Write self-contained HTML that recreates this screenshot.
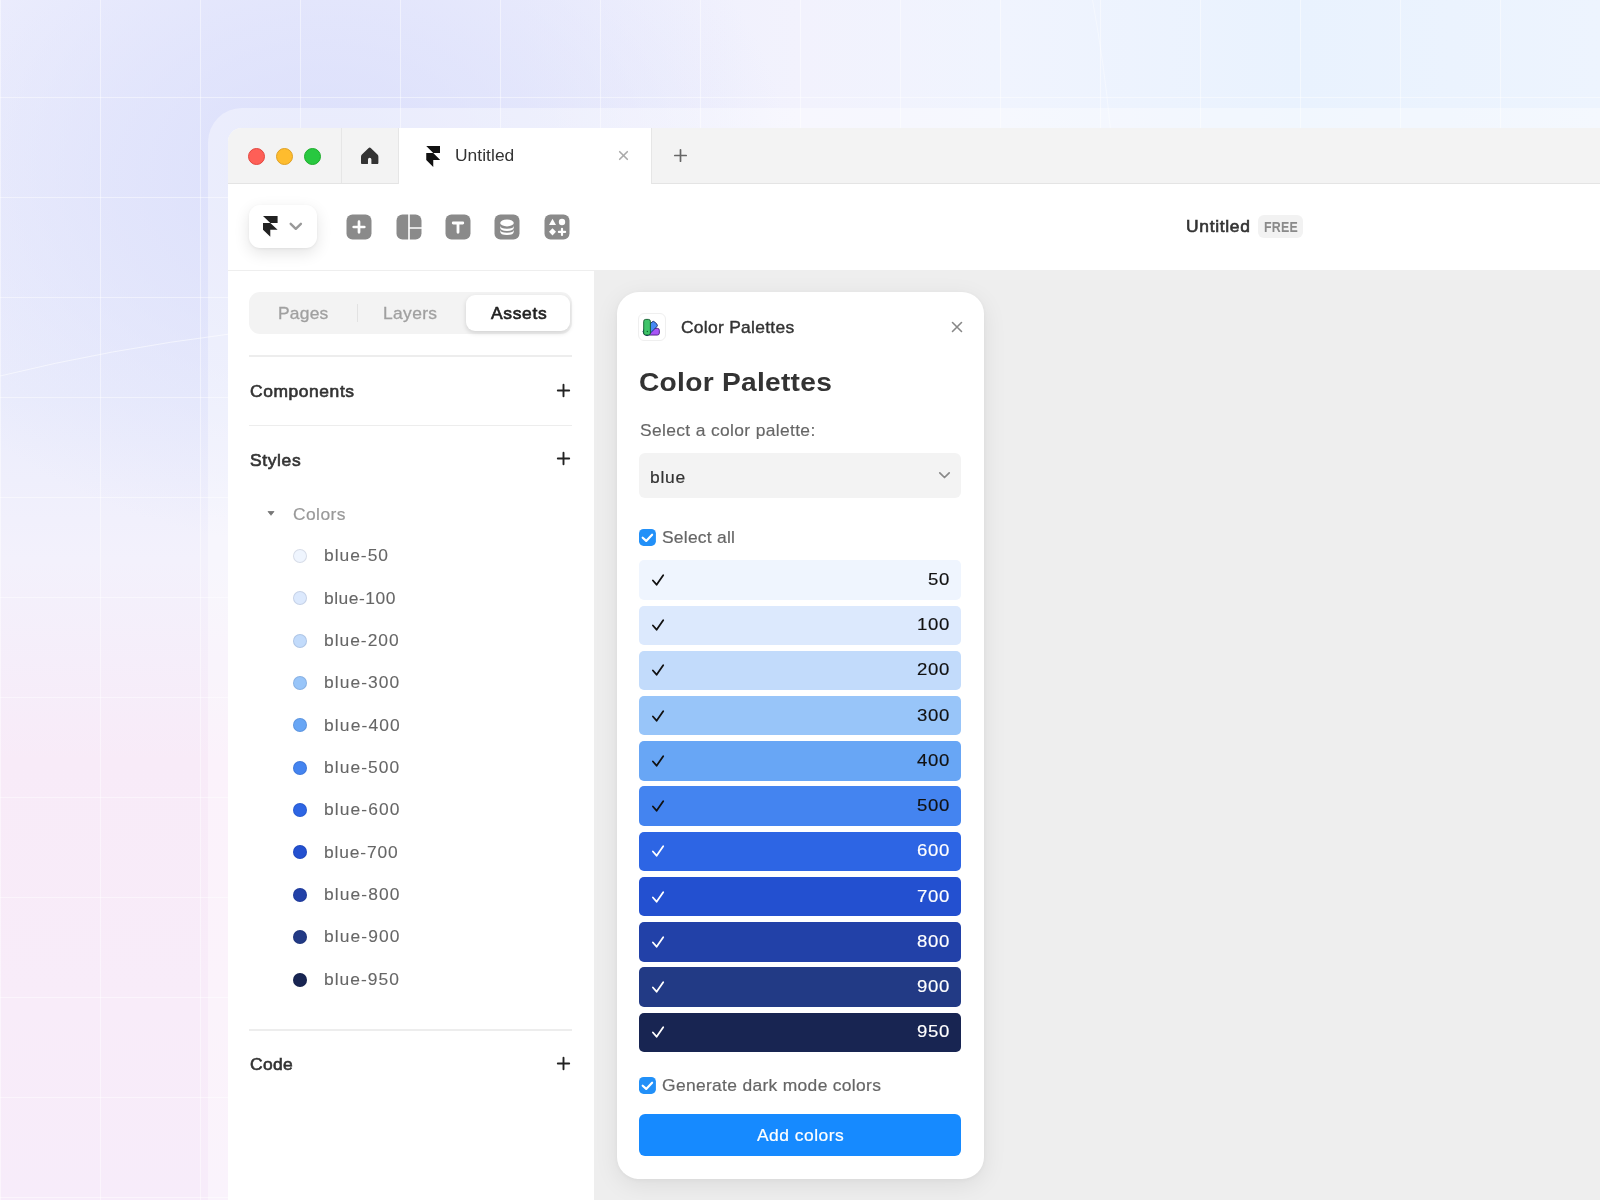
<!DOCTYPE html>
<html lang="en">
<head>
<meta charset="utf-8">
<title>Color Palettes</title>
<style>
*{box-sizing:border-box;margin:0;padding:0}
html,body{width:1600px;height:1200px;overflow:hidden}
body{font-family:"Liberation Sans",sans-serif;position:relative;background:#f3f1fb;color:#333}
.bg{position:absolute;inset:0;background:
 radial-gradient(ellipse 470px 370px at 320px 175px,#dbdffb 0%,rgba(219,223,251,.6) 45%,rgba(219,223,251,0) 100%),
 linear-gradient(90deg,rgba(242,242,253,0) 0,rgba(242,242,253,0) 520px,#f2f2fd 800px,#f0f4fe 1000px,#e9f2fe 1300px,#edf4fe 1600px),
 linear-gradient(180deg,#eeeffd 0,#ebedfc 400px,#f3f1fc 560px,#f8ebf8 760px,#f8ecf9 1000px,#f7ecfa 1200px);}
.grid{position:absolute;inset:0;background-image:
 linear-gradient(to right,transparent 0,transparent 99px,rgba(255,255,255,.45) 99px),
 linear-gradient(to bottom,transparent 0,transparent 99px,rgba(255,255,255,.45) 99px);
 background-size:100px 100px;background-position:1px -2px;}
.frame{position:absolute;left:208px;top:108px;width:1500px;height:1200px;border-radius:34px 0 0 0;background:rgba(255,255,255,.38)}
.win{position:absolute;left:228px;top:128px;width:1500px;height:1200px;border-radius:14px 0 0 0;background:#fff;overflow:hidden}
.abs{position:absolute}
.t{position:absolute;white-space:nowrap;line-height:1;transform-origin:0 0}
.dot{left:293px;width:14px;height:14px;border-radius:50%;box-shadow:inset 0 0 0 1px rgba(0,0,40,.1)}
.row{left:639px;width:322px;height:39.4px;border-radius:5px}
</style>
</head>
<body>
<div class="bg"></div>
<div class="grid"></div>
<svg class="abs" style="left:0;top:0" width="1600" height="1200" viewBox="0 0 1600 1200"><path d="M0 376 Q110 349 230 334" stroke="rgba(255,255,255,.55)" stroke-width="1" fill="none"/><path d="M1092.500 0 Q1104 62 1110.500 130" stroke="rgba(255,255,255,.4)" stroke-width="1" fill="none"/></svg>
<div class="frame"></div>
<div class="win" id="win">
<div class="abs" id="pg" style="left:-228px;top:-128px;width:1600px;height:1200px;will-change:transform">
<!-- title bar -->
<div class="abs" style="left:228px;top:128px;width:1400px;height:56px;background:#f3f3f3;border-bottom:1px solid #e4e4e4"></div>
<div class="abs" style="left:247.700px;top:147.600px;width:17.200px;height:17.200px;border-radius:50%;background:#fe5f57;border:1px solid #e2463f"></div>
<div class="abs" style="left:275.800px;top:147.600px;width:17.200px;height:17.200px;border-radius:50%;background:#febc2e;border:1px solid #dfa023"></div>
<div class="abs" style="left:304.100px;top:147.600px;width:17.200px;height:17.200px;border-radius:50%;background:#28c840;border:1px solid #1dad2b"></div>
<div class="abs" style="left:341px;top:128px;width:1px;height:55px;background:#e6e6e6"></div>
<svg class="abs" style="left:361.200px;top:146.800px" width="17.400" height="17.250" viewBox="0 0 17.400 17.250"><path d="M7.400 1.200Q8.700 -.1 10 1.200L16.500 7.600Q17.400 8.500 17.400 9.800V15.700Q17.400 17.250 15.900 17.250H11.400Q10.400 17.250 10.400 16.300V12.400Q10.400 10.700 8.700 10.700Q7 10.700 7 12.400V16.300Q7 17.250 6 17.250H1.500Q0 17.250 0 15.700V9.800Q0 8.500 .9 7.600Z" fill="#333"/></svg>
<div class="abs" style="left:398px;top:128px;width:254px;height:56px;background:#fff;border-left:1px solid #e6e6e6;border-right:1px solid #e6e6e6"></div>
<svg class="abs" style="left:425.500px;top:145.500px" width="14.500" height="21" viewBox="0 0 14 21"><path d="M0 0H14V7H7Z M0 7H7L14 14H7V21L0 14Z" fill="#111"/></svg>
<svg class="abs" style="left:618px;top:150px" width="11" height="11" viewBox="0 0 11 11"><path d="M1.700 1.700L9.300 9.300M9.300 1.700L1.700 9.300" stroke="#aaa" stroke-width="1.600" stroke-linecap="round"/></svg>
<svg class="abs" style="left:673px;top:148px" width="15" height="15" viewBox="0 0 15 15"><path d="M7.500 1.800V13.200M1.800 7.500H13.200" stroke="#666" stroke-width="1.700" stroke-linecap="round"/></svg>
<!-- toolbar -->
<div class="abs" style="left:228px;top:184px;width:1400px;height:86.500px;background:#fff;border-bottom:1px solid #eee"></div>
<div class="abs" style="left:249px;top:205px;width:68px;height:43px;border-radius:11px;background:#fff;box-shadow:0 5px 16px rgba(0,0,0,.11),0 1px 3px rgba(0,0,0,.05)"></div>
<svg class="abs" style="left:263px;top:216px" width="14.600" height="20.800" viewBox="0 0 14 21" preserveAspectRatio="none"><path d="M0 0H14V7H7Z M0 7H7L14 14H7V21L0 14Z" fill="#222"/></svg>
<svg class="abs" style="left:288px;top:221px" width="16" height="12" viewBox="0 0 16 12"><path d="M2.700 2.800L7.800 7.800L12.900 2.800" stroke="#999" stroke-width="2.400" fill="none" stroke-linecap="round" stroke-linejoin="round"/></svg>
<!-- tool icons -->
<svg class="abs" style="left:346.0px;top:214px" width="26" height="26" viewBox="0 0 26 26"><rect x=".5" y=".5" width="25" height="25" rx="6" fill="#8a8a8a"/><path d="M13 7.700V18.300M7.700 13H18.300" stroke="#fff" stroke-width="2.700" stroke-linecap="round"/></svg>
<svg class="abs" style="left:396.0px;top:214px" width="26" height="26" viewBox="0 0 26 26"><rect x=".5" y=".5" width="25" height="25" rx="6" fill="#8a8a8a"/><path d="M13 0V26M13 14H26" stroke="#fff" stroke-width="1.600"/></svg>
<svg class="abs" style="left:445.4px;top:214px" width="26" height="26" viewBox="0 0 26 26"><rect x=".5" y=".5" width="25" height="25" rx="6" fill="#8a8a8a"/><path d="M8.200 9H17.800M13 9V18.300" stroke="#fff" stroke-width="2.800" stroke-linecap="round"/></svg>
<svg class="abs" style="left:494.4px;top:214px" width="26" height="26" viewBox="0 0 26 26"><rect x=".5" y=".5" width="25" height="25" rx="6" fill="#8a8a8a"/><ellipse cx="13" cy="8.900" rx="6.800" ry="3.500" fill="#fff"/><path d="M6.200 11.400 Q6.200 14.700 13 14.700 Q19.800 14.700 19.800 11.400 V13.600 Q19.800 17 13 17 Q6.200 17 6.200 13.600Z M6.200 15.500 Q6.200 18.800 13 18.800 Q19.800 18.800 19.800 15.500 V17.500 Q19.800 21 13 21 Q6.200 21 6.200 17.500Z" fill="#fff"/></svg>
<svg class="abs" style="left:544.3px;top:214px" width="26" height="26" viewBox="0 0 26 26"><rect x=".5" y=".5" width="25" height="25" rx="6" fill="#8a8a8a"/><path d="M8.500 4.800L12 11H5Z" fill="#fff"/><circle cx="18" cy="8" r="3.200" fill="#fff"/><path d="M8.500 14.200L12 17.800L8.500 21.400L5 17.800Z" fill="#fff"/><path d="M18 14.800V21M14.900 17.900H21.100" stroke="#fff" stroke-width="2.200" stroke-linecap="round"/></svg>
<div class="abs" style="left:1257.500px;top:215px;width:45.500px;height:23px;border-radius:6px;background:#f2f2f2"></div>
<!-- canvas -->
<div class="abs" style="left:594px;top:270px;width:1100px;height:940px;background:#eee"></div>
<!-- sidebar -->
<div class="abs" style="left:249px;top:292px;width:322.500px;height:42px;border-radius:11px;background:#f3f3f3"></div>
<div class="abs" style="left:356.500px;top:304px;width:1px;height:18px;background:#e2e2e2"></div>
<div class="abs" style="left:466px;top:294.600px;width:104px;height:36px;border-radius:9px;background:#fff;box-shadow:0 2px 5px rgba(0,0,0,.14)"></div>
<div class="abs" style="left:249px;top:355.200px;width:323px;height:1.500px;background:#ededed"></div>
<div class="abs" style="left:249px;top:424.700px;width:323px;height:1.500px;background:#ededed"></div>
<div class="abs" style="left:249px;top:1029.200px;width:323px;height:1.500px;background:#ededed"></div>
<svg class="abs" style="left:556px;top:383.300px" width="15" height="15" viewBox="0 0 15 15"><path d="M7.500 1.800V13.200M1.800 7.500H13.200" stroke="#222" stroke-width="1.900" stroke-linecap="round"/></svg>
<svg class="abs" style="left:556px;top:451.300px" width="15" height="15" viewBox="0 0 15 15"><path d="M7.500 1.800V13.200M1.800 7.500H13.200" stroke="#222" stroke-width="1.900" stroke-linecap="round"/></svg>
<svg class="abs" style="left:556px;top:1056.400px" width="15" height="15" viewBox="0 0 15 15"><path d="M7.500 1.800V13.200M1.800 7.500H13.200" stroke="#222" stroke-width="1.900" stroke-linecap="round"/></svg>
<svg class="abs" style="left:267px;top:510.500px" width="8" height="5" viewBox="0 0 8 5"><path d="M1 .5H7L4 4.300Z" fill="#777" stroke="#777" stroke-width=".8" stroke-linejoin="round"/></svg>
<div class="abs dot" style="top:549.00px;background:#eff5fe"></div>
<div class="abs dot" style="top:591.36px;background:#dce9fd"></div>
<div class="abs dot" style="top:633.71px;background:#c2dbfb"></div>
<div class="abs dot" style="top:676.07px;background:#98c5f9"></div>
<div class="abs dot" style="top:718.42px;background:#68a6f5"></div>
<div class="abs dot" style="top:760.77px;background:#4484f0"></div>
<div class="abs dot" style="top:803.13px;background:#2d65e4"></div>
<div class="abs dot" style="top:845.48px;background:#2350d0"></div>
<div class="abs dot" style="top:887.84px;background:#2241a8"></div>
<div class="abs dot" style="top:930.19px;background:#223a85"></div>
<div class="abs dot" style="top:972.55px;background:#182552"></div>

<!-- panel -->
<div class="abs" style="left:617px;top:292px;width:367px;height:887px;border-radius:22px;background:#fff;box-shadow:0 6px 24px rgba(0,0,0,.08),0 1px 4px rgba(0,0,0,.04)"></div>
<div class="abs" style="left:638.300px;top:313.300px;width:27.400px;height:27.400px;border-radius:6px;border:1px solid #efefef;background:#fff"></div>
<svg class="abs" style="left:634px;top:309px" width="36" height="36" viewBox="0 0 36 36"><rect x="9.700" y="10.400" width="6.700" height="15.600" rx="2" fill="#a855f7" stroke="#4c1d80" stroke-width=".9" transform="rotate(90 13.050 22.700)"/><rect x="9.700" y="10.400" width="6.700" height="15.600" rx="2" fill="#4688f3" stroke="#18306e" stroke-width=".9" transform="rotate(45 13.050 22.700)"/><rect x="9.700" y="10.400" width="6.700" height="15.600" rx="2" fill="#3fc469" stroke="#0c5a2a" stroke-width=".9"/><circle cx="13.400" cy="22.500" r=".75" fill="#0b6b2e"/></svg>
<svg class="abs" style="left:951px;top:321.300px" width="12" height="12" viewBox="0 0 12 12"><path d="M1.500 1.500L10.500 10.500M10.500 1.500L1.500 10.500" stroke="#888" stroke-width="1.600" stroke-linecap="round"/></svg>
<div class="abs" style="left:639px;top:453px;width:322px;height:45px;border-radius:6px;background:#f3f3f3"></div>
<svg class="abs" style="left:937.700px;top:471px" width="13" height="9" viewBox="0 0 13 9"><path d="M1.800 1.800L6.500 6.500L11.200 1.800" stroke="#888" stroke-width="1.700" fill="none" stroke-linecap="round" stroke-linejoin="round"/></svg>
<svg class="abs" style="left:639px;top:529px" width="17" height="17" viewBox="0 0 17 17"><rect width="16.900" height="16.900" rx="4.600" fill="#2290f8"/><path d="M3.700 8.700L7.200 11.900L13.100 5.700" stroke="#fff" stroke-width="2.200" fill="none" stroke-linecap="round" stroke-linejoin="round"/></svg>
<div class="abs row" style="top:560.30px;background:#eff5fe"></div>
<svg class="abs" style="left:651px;top:573.00px" width="14" height="14" viewBox="0 0 14 14"><path d="M1.9 7.5L5.6 11.7L12.2 2.3" stroke="#111" stroke-width="1.8" fill="none" stroke-linecap="round" stroke-linejoin="round"/></svg>
<div class="abs row" style="top:605.53px;background:#dce9fd"></div>
<svg class="abs" style="left:651px;top:618.23px" width="14" height="14" viewBox="0 0 14 14"><path d="M1.9 7.5L5.6 11.7L12.2 2.3" stroke="#111" stroke-width="1.8" fill="none" stroke-linecap="round" stroke-linejoin="round"/></svg>
<div class="abs row" style="top:650.76px;background:#c2dbfb"></div>
<svg class="abs" style="left:651px;top:663.46px" width="14" height="14" viewBox="0 0 14 14"><path d="M1.9 7.5L5.6 11.7L12.2 2.3" stroke="#111" stroke-width="1.8" fill="none" stroke-linecap="round" stroke-linejoin="round"/></svg>
<div class="abs row" style="top:695.99px;background:#98c5f9"></div>
<svg class="abs" style="left:651px;top:708.69px" width="14" height="14" viewBox="0 0 14 14"><path d="M1.9 7.5L5.6 11.7L12.2 2.3" stroke="#111" stroke-width="1.8" fill="none" stroke-linecap="round" stroke-linejoin="round"/></svg>
<div class="abs row" style="top:741.22px;background:#68a6f5"></div>
<svg class="abs" style="left:651px;top:753.92px" width="14" height="14" viewBox="0 0 14 14"><path d="M1.9 7.5L5.6 11.7L12.2 2.3" stroke="#111" stroke-width="1.8" fill="none" stroke-linecap="round" stroke-linejoin="round"/></svg>
<div class="abs row" style="top:786.45px;background:#4484f0"></div>
<svg class="abs" style="left:651px;top:799.15px" width="14" height="14" viewBox="0 0 14 14"><path d="M1.9 7.5L5.6 11.7L12.2 2.3" stroke="#111" stroke-width="1.8" fill="none" stroke-linecap="round" stroke-linejoin="round"/></svg>
<div class="abs row" style="top:831.68px;background:#2d65e4"></div>
<svg class="abs" style="left:651px;top:844.38px" width="14" height="14" viewBox="0 0 14 14"><path d="M1.9 7.5L5.6 11.7L12.2 2.3" stroke="#fff" stroke-width="1.8" fill="none" stroke-linecap="round" stroke-linejoin="round"/></svg>
<div class="abs row" style="top:876.91px;background:#2350d0"></div>
<svg class="abs" style="left:651px;top:889.61px" width="14" height="14" viewBox="0 0 14 14"><path d="M1.9 7.5L5.6 11.7L12.2 2.3" stroke="#fff" stroke-width="1.8" fill="none" stroke-linecap="round" stroke-linejoin="round"/></svg>
<div class="abs row" style="top:922.14px;background:#2241a8"></div>
<svg class="abs" style="left:651px;top:934.84px" width="14" height="14" viewBox="0 0 14 14"><path d="M1.9 7.5L5.6 11.7L12.2 2.3" stroke="#fff" stroke-width="1.8" fill="none" stroke-linecap="round" stroke-linejoin="round"/></svg>
<div class="abs row" style="top:967.37px;background:#223a85"></div>
<svg class="abs" style="left:651px;top:980.07px" width="14" height="14" viewBox="0 0 14 14"><path d="M1.9 7.5L5.6 11.7L12.2 2.3" stroke="#fff" stroke-width="1.8" fill="none" stroke-linecap="round" stroke-linejoin="round"/></svg>
<div class="abs row" style="top:1012.60px;background:#182552"></div>
<svg class="abs" style="left:651px;top:1025.30px" width="14" height="14" viewBox="0 0 14 14"><path d="M1.9 7.5L5.6 11.7L12.2 2.3" stroke="#fff" stroke-width="1.8" fill="none" stroke-linecap="round" stroke-linejoin="round"/></svg>

<svg class="abs" style="left:639px;top:1077px" width="17" height="17" viewBox="0 0 17 17"><rect width="16.900" height="16.900" rx="4.600" fill="#2290f8"/><path d="M3.700 8.700L7.200 11.900L13.100 5.700" stroke="#fff" stroke-width="2.200" fill="none" stroke-linecap="round" stroke-linejoin="round"/></svg>
<div class="abs" style="left:639px;top:1114.200px;width:322px;height:42px;border-radius:6px;background:#168aff"></div>
<div class="t" style="left:454.95px;top:148.00px;font-size:16.6px;color:#333;letter-spacing:0.029px;transform:scaleX(1.05)">Untitled</div>
<div class="t" style="left:1186.25px;top:219.00px;font-size:16.6px;color:#333;letter-spacing:0.655px;transform:scaleX(1.05);-webkit-text-stroke:0.62px #333">Untitled</div>
<div class="t" style="left:1264.00px;top:221.00px;font-size:13.8px;color:#8a8a8a;letter-spacing:0.284px;transform:scaleX(0.9);font-weight:bold">FREE</div>
<div class="t" style="left:277.85px;top:306.00px;font-size:16.6px;color:#a0a0a0;letter-spacing:0.204px;transform:scaleX(1.05);-webkit-text-stroke:0.3px #a0a0a0">Pages</div>
<div class="t" style="left:383.45px;top:306.00px;font-size:16.6px;color:#a0a0a0;letter-spacing:0.336px;transform:scaleX(1.05);-webkit-text-stroke:0.3px #a0a0a0">Layers</div>
<div class="t" style="left:490.70px;top:306.00px;font-size:16.6px;color:#222;letter-spacing:0.633px;transform:scaleX(1.05);-webkit-text-stroke:0.62px #222">Assets</div>
<div class="t" style="left:249.60px;top:384.00px;font-size:16.6px;color:#333;letter-spacing:0.553px;transform:scaleX(1.05);-webkit-text-stroke:0.62px #333">Components</div>
<div class="t" style="left:249.60px;top:453.00px;font-size:16.6px;color:#333;letter-spacing:0.603px;transform:scaleX(1.05);-webkit-text-stroke:0.62px #333">Styles</div>
<div class="t" style="left:249.60px;top:1057.00px;font-size:16.6px;color:#333;letter-spacing:0.313px;transform:scaleX(1.05);-webkit-text-stroke:0.62px #333">Code</div>
<div class="t" style="left:293.10px;top:507.00px;font-size:16.6px;color:#999;letter-spacing:0.403px;transform:scaleX(1.05);-webkit-text-stroke:0.2px #999">Colors</div>
<div class="t" style="left:323.75px;top:548.00px;font-size:16.6px;color:#666;letter-spacing:0.931px;transform:scaleX(1.05);-webkit-text-stroke:0.1px #666">blue-50</div>
<div class="t" style="left:323.75px;top:591.00px;font-size:16.6px;color:#666;letter-spacing:0.500px;transform:scaleX(1.05);-webkit-text-stroke:0.1px #666">blue-100</div>
<div class="t" style="left:323.75px;top:633.00px;font-size:16.6px;color:#666;letter-spacing:0.936px;transform:scaleX(1.05);-webkit-text-stroke:0.1px #666">blue-200</div>
<div class="t" style="left:323.75px;top:675.00px;font-size:16.6px;color:#666;letter-spacing:1.004px;transform:scaleX(1.05);-webkit-text-stroke:0.1px #666">blue-300</div>
<div class="t" style="left:323.75px;top:718.00px;font-size:16.6px;color:#666;letter-spacing:1.085px;transform:scaleX(1.05);-webkit-text-stroke:0.1px #666">blue-400</div>
<div class="t" style="left:323.75px;top:760.00px;font-size:16.6px;color:#666;letter-spacing:1.004px;transform:scaleX(1.05);-webkit-text-stroke:0.1px #666">blue-500</div>
<div class="t" style="left:323.75px;top:802.00px;font-size:16.6px;color:#666;letter-spacing:1.044px;transform:scaleX(1.05);-webkit-text-stroke:0.1px #666">blue-600</div>
<div class="t" style="left:323.75px;top:845.00px;font-size:16.6px;color:#666;letter-spacing:0.800px;transform:scaleX(1.05);-webkit-text-stroke:0.1px #666">blue-700</div>
<div class="t" style="left:323.75px;top:887.00px;font-size:16.6px;color:#666;letter-spacing:1.044px;transform:scaleX(1.05);-webkit-text-stroke:0.1px #666">blue-800</div>
<div class="t" style="left:323.75px;top:929.00px;font-size:16.6px;color:#666;letter-spacing:1.044px;transform:scaleX(1.05);-webkit-text-stroke:0.1px #666">blue-900</div>
<div class="t" style="left:323.75px;top:972.00px;font-size:16.6px;color:#666;letter-spacing:0.963px;transform:scaleX(1.05);-webkit-text-stroke:0.1px #666">blue-950</div>
<div class="t" style="left:680.75px;top:320.00px;font-size:16.6px;color:#333;letter-spacing:0.273px;transform:scaleX(1.05);-webkit-text-stroke:0.4px #333">Color Palettes</div>
<div class="t" style="left:638.70px;top:370.00px;font-size:25.6px;color:#333;letter-spacing:0.248px;transform:scaleX(1.1);font-weight:bold">Color Palettes</div>
<div class="t" style="left:639.80px;top:423.00px;font-size:16.6px;color:#666;letter-spacing:0.333px;transform:scaleX(1.05);-webkit-text-stroke:0.15px #666">Select a color palette:</div>
<div class="t" style="left:649.75px;top:470.00px;font-size:16.6px;color:#333;letter-spacing:0.714px;transform:scaleX(1.05);-webkit-text-stroke:0.2px #333">blue</div>
<div class="t" style="left:662.40px;top:530.00px;font-size:16.6px;color:#666;letter-spacing:0.235px;transform:scaleX(1.05);-webkit-text-stroke:0.2px #666">Select all</div>
<div class="t" style="left:928.21px;top:572.00px;font-size:16.6px;color:#111;letter-spacing:0.600px;transform:scaleX(1.12);-webkit-text-stroke:0.15px #111">50</div>
<div class="t" style="left:917.20px;top:617.00px;font-size:16.6px;color:#111;letter-spacing:0.600px;transform:scaleX(1.12);-webkit-text-stroke:0.15px #111">100</div>
<div class="t" style="left:917.20px;top:662.00px;font-size:16.6px;color:#111;letter-spacing:0.600px;transform:scaleX(1.12);-webkit-text-stroke:0.15px #111">200</div>
<div class="t" style="left:917.20px;top:708.00px;font-size:16.6px;color:#111;letter-spacing:0.600px;transform:scaleX(1.12);-webkit-text-stroke:0.15px #111">300</div>
<div class="t" style="left:917.20px;top:753.00px;font-size:16.6px;color:#111;letter-spacing:0.600px;transform:scaleX(1.12);-webkit-text-stroke:0.15px #111">400</div>
<div class="t" style="left:917.20px;top:798.00px;font-size:16.6px;color:#111;letter-spacing:0.600px;transform:scaleX(1.12);-webkit-text-stroke:0.15px #111">500</div>
<div class="t" style="left:917.20px;top:843.00px;font-size:16.6px;color:#fff;letter-spacing:0.600px;transform:scaleX(1.12);-webkit-text-stroke:0.15px #fff">600</div>
<div class="t" style="left:917.20px;top:889.00px;font-size:16.6px;color:#fff;letter-spacing:0.600px;transform:scaleX(1.12);-webkit-text-stroke:0.15px #fff">700</div>
<div class="t" style="left:917.20px;top:934.00px;font-size:16.6px;color:#fff;letter-spacing:0.600px;transform:scaleX(1.12);-webkit-text-stroke:0.15px #fff">800</div>
<div class="t" style="left:917.20px;top:979.00px;font-size:16.6px;color:#fff;letter-spacing:0.600px;transform:scaleX(1.12);-webkit-text-stroke:0.15px #fff">900</div>
<div class="t" style="left:917.20px;top:1024.00px;font-size:16.6px;color:#fff;letter-spacing:0.600px;transform:scaleX(1.12);-webkit-text-stroke:0.15px #fff">950</div>
<div class="t" style="left:662.40px;top:1078.00px;font-size:16.6px;color:#666;letter-spacing:0.309px;transform:scaleX(1.05);-webkit-text-stroke:0.2px #666">Generate dark mode colors</div>
<div class="t" style="left:757.00px;top:1128.00px;font-size:16.6px;color:#fff;letter-spacing:0.475px;transform:scaleX(1.05);-webkit-text-stroke:0.2px #fff">Add colors</div>
</div>
</div>
</body>
</html>
